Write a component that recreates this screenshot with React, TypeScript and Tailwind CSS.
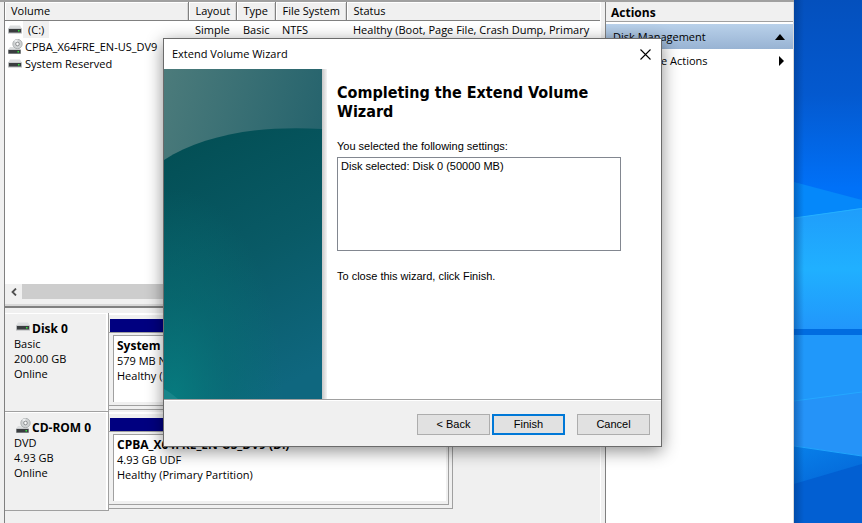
import React from "react";

const UI = "font-['Open_Sans','Noto_Sans',sans-serif]";

function DriveIcon() {
  return (
    <svg width="14" height="9" viewBox="0 0 14 9" className="shrink-0" aria-hidden="true">
      <path d="M2 0.500h10L14 4H0z" fill="#dcdedf" />
      <path d="M0 3.500h14V8.500H0z" fill="#b4b7b9" />
      <path d="M1 4h12v3.500H1z" fill="#3a3d3f" />
      <path d="M10 5h1.500v1.500H10z" fill="#2fe53c" />
    </svg>
  );
}

function DiscIcon() {
  return (
    <svg width="15" height="15" viewBox="0 0 15 15" className="shrink-0" aria-hidden="true">
      <path d="M2 8h9l2 3H0z" fill="#dcdedf" />
      <circle cx="9.500" cy="5" r="4.700" fill="#cfd2d3" stroke="#9a9d9f" strokeWidth="0.700" />
      <path d="M9.500 5L6 1.800A4.700 4.700 0 0 1 9.500 0.500z" fill="#eceeef" />
      <circle cx="9.500" cy="5" r="1.800" fill="#fafafa" stroke="#85888a" strokeWidth="0.900" />
      <path d="M0 10.500h13V15H0z" fill="#b4b7b9" />
      <path d="M0.500 11h12v3.500H0.500z" fill="#3a3d3f" />
      <path d="M9.500 12H11v1.500H9.500z" fill="#2fe53c" />
    </svg>
  );
}

function VolumeTable() {
  const th =
    "h-[18px] border-r border-[#808080] bg-[#f0f0f0] p-0 pl-[7px] text-left font-normal shadow-[inset_1px_1px_0_#fff,inset_-1px_0_0_#d8d8d8]";
  const td = "h-[17px] overflow-hidden p-0 pl-[7px]";
  return (
    <table className="w-full table-fixed border-collapse text-[11px] leading-[17px] whitespace-nowrap">
      <colgroup>
        <col className="w-[183px]" />
        <col className="w-[48px]" />
        <col className="w-[39px]" />
        <col className="w-[71px]" />
        <col />
      </colgroup>
      <thead>
        <tr className="border-b border-[#808080]">
          <th className="h-[18px] border-r border-[#808080] bg-[#f0f0f0] p-0 pl-[6px] text-left font-normal shadow-[inset_1px_1px_0_#fff,inset_-1px_0_0_#d8d8d8]">
            Volume
          </th>
          <th className={th}>Layout</th>
          <th className={th}>Type</th>
          <th className={th}>File System</th>
          <th className="h-[18px] bg-[#f0f0f0] p-0 pl-[7px] text-left font-normal shadow-[inset_1px_1px_0_#fff]">Status</th>
        </tr>
      </thead>
      <tbody>
        <tr>
          <td className="h-[17px] p-0 pl-[3px]">
            <div className="flex items-center gap-px">
              <DriveIcon />
              <span className="bg-[#f0f0f0] px-[5px]">(C:)</span>
            </div>
          </td>
          <td className={td}>Simple</td>
          <td className={td}>Basic</td>
          <td className={td}>NTFS</td>
          <td className={td}>Healthy (Boot, Page File, Crash Dump, Primary</td>
        </tr>
        <tr>
          <td className="h-[17px] overflow-hidden p-0 pl-[3px]">
            <div className="flex items-center gap-[2px]">
              <DiscIcon />
              <span>CPBA_X64FRE_EN-US_DV9</span>
            </div>
          </td>
          <td className={td} colSpan={4}></td>
        </tr>
        <tr>
          <td className="h-[17px] p-0 pl-[3px]">
            <div className="flex items-center gap-[3px]">
              <DriveIcon />
              <span>System Reserved</span>
            </div>
          </td>
          <td className={td} colSpan={4}></td>
        </tr>
      </tbody>
    </table>
  );
}

type DiskProps = {
  icon: React.ReactNode;
  name: string;
  lines: string[];
  volume: string;
  details: string[];
};

function DiskRow({ icon, name, lines, volume, details }: DiskProps) {
  return (
    <section className="flex h-[99px] text-[11px] leading-[15px]">
      <div className="w-[104px] shrink-0 border-r border-b border-[#a0a0a0] pt-[8px] pl-[9px] shadow-[inset_0_1px_0_#fff,inset_-2px_0_0_#fff]">
        <h2 className="flex h-[15px] items-center pl-[2px] text-[12px] font-bold">
          <span className="flex w-[16px] pb-[5px]">{icon}</span>
          {name}
        </h2>
        {lines.map((l) => (
          <p key={l}>{l}</p>
        ))}
      </div>
      <div className="h-[97px] w-[344px] border-r border-b border-[#a0a0a0] pt-[6px] pr-[3px] pb-[3px] shadow-[inset_0_2px_0_#fff]">
        <div className="flex h-full flex-col border-r border-b border-[#a0a0a0] pr-[2px] pb-[3px]">
          <div className="ml-px h-[13px] bg-[#000080]" />
          <div className="mb-[2px] h-px bg-[#a0a0a0]" />
          <div className="ml-[4px] flex-1 overflow-hidden border-t border-l border-[#a0a0a0] bg-white pt-[2px] pl-[3px] whitespace-nowrap">
            <h3 className="text-[12px] font-bold">{volume}</h3>
            {details.map((d) => (
              <p key={d}>{d}</p>
            ))}
          </div>
        </div>
      </div>
    </section>
  );
}

function ActionsPane() {
  return (
    <aside className="flex w-[188px] shrink-0 flex-col border-l border-[#808080] bg-white text-[11px] leading-[17px]">
      <h2 className="h-[20px] border-b border-[#a0a0a0] bg-[#f0f0f0] pt-[2px] pl-[5px] text-[12px] font-bold">Actions</h2>
      <div className="mt-[2px] flex h-[25px] items-center justify-between bg-linear-to-b from-[#b9d1ea] to-[#98b3d3] pr-[8px] pl-[7px]">
        <span>Disk Management</span>
        <svg width="10" height="6" viewBox="0 0 10 6" aria-hidden="true">
          <path d="M5 0l5 6H0z" fill="#000" />
        </svg>
      </div>
      <button type="button" className="flex h-[23px] items-center justify-between pr-[9px] pl-[34px] text-left">
        <span>More Actions</span>
        <svg width="5" height="10" viewBox="0 0 5 10" aria-hidden="true">
          <path d="M0 0l5 5-5 5z" fill="#000" />
        </svg>
      </button>
    </aside>
  );
}

function Wallpaper() {
  return (
    <svg className="h-full w-full" viewBox="0 0 68 523" preserveAspectRatio="none" aria-hidden="true">
      <defs>
        <linearGradient id="sky" x1="0" y1="0" x2="0" y2="1">
          <stop offset="0" stopColor="#0450bd" />
          <stop offset="0.180" stopColor="#0459cf" />
          <stop offset="0.360" stopColor="#0071f8" />
          <stop offset="0.400" stopColor="#0074f5" />
        </linearGradient>
        <linearGradient id="paneTop" x1="0" y1="0" x2="0" y2="1">
          <stop offset="0" stopColor="#1f9dfb" />
          <stop offset="0.500" stopColor="#20b0ff" />
          <stop offset="1" stopColor="#2196fb" />
        </linearGradient>
        <linearGradient id="ground" x1="0" y1="0" x2="0.300" y2="1">
          <stop offset="0" stopColor="#0880ea" />
          <stop offset="1" stopColor="#025bcf" />
        </linearGradient>
        <linearGradient id="edge" x1="0" y1="0" x2="1" y2="0">
          <stop offset="0" stopColor="#003070" stopOpacity="0.400" />
          <stop offset="1" stopColor="#003070" stopOpacity="0" />
        </linearGradient>
      </defs>
      <path d="M0 0h68v523H0z" fill="url(#sky)" />
      <path d="M0 182L68 200V210L0 218z" fill="#0588fa" />
      <path d="M0 218L68 208V330H0z" fill="url(#paneTop)" />
      <path d="M0 218L68 208.500" stroke="#25b0ff" strokeWidth="1.200" />
      <path d="M0 329h68v6H0z" fill="#006ce0" />
      <path d="M0 335h68v58L0 402z" fill="#2098fa" />
      <path d="M0 401L68 392V456L0 446z" fill="#2593f8" />
      <path d="M0 401L68 392" stroke="#25a8ff" strokeWidth="1.200" />
      <path d="M0 446L68 456V523H0z" fill="url(#ground)" />
      <path d="M0 484L68 464V523H0z" fill="#025fd2" />
      <path d="M0 446L68 456" stroke="#22a5fc" strokeWidth="1.200" />
      <path d="M0 0h10v523H0z" fill="url(#edge)" />
    </svg>
  );
}

function WizardArt() {
  return (
    <svg className="h-full w-[158px] shrink-0" viewBox="0 0 158 330" preserveAspectRatio="none" aria-hidden="true">
      <defs>
        <linearGradient id="haze" x1="0" y1="0" x2="1" y2="0.500">
          <stop offset="0" stopColor="#4c7b7b" />
          <stop offset="1" stopColor="#20606b" />
        </linearGradient>
        <linearGradient id="sea" x1="0.300" y1="0" x2="0.600" y2="1">
          <stop offset="0" stopColor="#034f55" />
          <stop offset="0.500" stopColor="#095a66" />
          <stop offset="1" stopColor="#0f677f" />
        </linearGradient>
        <radialGradient id="glow" gradientUnits="userSpaceOnUse" cx="0" cy="0" r="1" gradientTransform="translate(10 330) scale(110 210)">
          <stop offset="0" stopColor="#067f80" stopOpacity="0.850" />
          <stop offset="0.500" stopColor="#067274" stopOpacity="0.450" />
          <stop offset="1" stopColor="#067274" stopOpacity="0" />
        </radialGradient>
      </defs>
      <path d="M0 0h158v330H0z" fill="url(#haze)" />
      <path d="M0 91C38 67 92 56 158 60V330H0z" fill="url(#sea)" />
      <path d="M0 91C38 67 92 56 158 60V330H0z" fill="url(#glow)" />
      <path d="M0 320q6 3 14 10H0z" fill="#17858a" />
    </svg>
  );
}

function Wizard() {
  const button = "h-[21px] w-[73px] border border-[#adadad] bg-[#e1e1e1] text-center leading-[19px]";
  return (
    <div
      role="dialog"
      aria-labelledby="wizard-title"
      className="absolute top-[38px] left-[163px] flex w-[499px] flex-col border border-[#6b6b6b] bg-white shadow-[0_4px_16px_rgba(0,0,0,0.45)]"
    >
      <header className="flex h-[30px] items-center justify-between pr-[10px] pl-[8px]">
        <h1 id="wizard-title" className="text-[11px]">
          Extend Volume Wizard
        </h1>
        <button type="button" aria-label="Close">
          <svg width="11" height="11" viewBox="0 0 11 11" aria-hidden="true">
            <path d="M0.500 0.500l10 10M10.500 0.500l-10 10" stroke="#000" strokeWidth="1.100" />
          </svg>
        </button>
      </header>
      <div className="flex h-[330px]">
        <WizardArt />
        <div className="w-[5px] shrink-0 bg-linear-to-r from-[#c8c8c8] to-[#f4f4f4]" />
        <div className="flex flex-1 flex-col pt-[14px] pr-[40px] pl-[10px] font-['Liberation_Sans',Arial,sans-serif] text-[11px] leading-[14px]">
          <h2 className="font-['DejaVu_Sans_Condensed','DejaVu_Sans',sans-serif] text-[16px] leading-[19px] font-bold">
            Completing the Extend Volume Wizard
          </h2>
          <label htmlFor="settings" className="mt-[18px]">
            You selected the following settings:
          </label>
          <textarea
            id="settings"
            readOnly
            className="mt-[4px] h-[94px] w-full resize-none border border-[#828790] bg-white px-[3px] py-px outline-none"
            defaultValue="Disk selected: Disk 0 (50000 MB)"
          />
          <p className="mt-[18px]">To close this wizard, click Finish.</p>
        </div>
      </div>
      <footer className="flex h-[47px] items-center justify-end border-t border-[#a0a0a0] bg-[#f0f0f0] pt-[2px] pr-[11px] font-['Liberation_Sans',Arial,sans-serif] text-[11px] shadow-[inset_0_1px_0_#fff]">
        <button type="button" className={button}>
          &lt; Back
        </button>
        <button
          type="button"
          className="mr-[12px] ml-[2px] h-[21px] w-[73px] border-2 border-[#0078d7] bg-[#e1e1e1] text-center leading-[17px]"
        >
          Finish
        </button>
        <button type="button" className={button}>
          Cancel
        </button>
      </footer>
    </div>
  );
}

export default function App() {
  return (
    <div className={`relative flex min-h-screen overflow-hidden bg-[#f0f0f0] text-black ${UI}`}>
      <div className="flex min-w-0 flex-1 border-t-2 border-[#a0a0a0] pl-[4px]">
        <main className="flex min-w-0 flex-1 flex-col border-l border-[#808080]">
          <div className="flex h-[297px] flex-col bg-white">
            <VolumeTable />
            <div className="mt-auto flex h-[15px] bg-[#f0f0f0]">
              <button type="button" aria-label="Scroll left" className="flex w-[17px] items-center justify-center">
                <svg width="6" height="8" viewBox="0 0 6 8" aria-hidden="true">
                  <path d="M5 0.500L1.500 4 5 7.500" fill="none" stroke="#505050" strokeWidth="1.800" />
                </svg>
              </button>
              <div className="mr-[60px] flex-1 bg-[#cdcdcd]" />
            </div>
          </div>
          <div className="mb-[5px] h-[9px] border-b-2 border-[#808080] bg-[#f0f0f0] shadow-[inset_0_-2px_0_#d8d8d8]" />
          <DiskRow
            icon={<DriveIcon />}
            name="Disk 0"
            lines={["Basic", "200.00 GB", "Online"]}
            volume="System Reserved"
            details={["579 MB NTFS", "Healthy (System)"]}
          />
          <DiskRow
            icon={<DiscIcon />}
            name="CD-ROM 0"
            lines={["DVD", "4.93 GB", "Online"]}
            volume="CPBA_X64FRE_EN-US_DV9  (D:)"
            details={["4.93 GB UDF", "Healthy (Primary Partition)"]}
          />
        </main>
        <div className="w-[5px] shrink-0 border-l border-white bg-[#f0f0f0]" />
        <ActionsPane />
        <div className="w-px bg-[#d8d8d8]" />
      </div>
      <div className="w-[68px] shrink-0 self-stretch bg-[#0459cf]">
        <div className="h-screen min-h-full">
          <Wallpaper />
        </div>
      </div>
      <Wizard />
    </div>
  );
}
